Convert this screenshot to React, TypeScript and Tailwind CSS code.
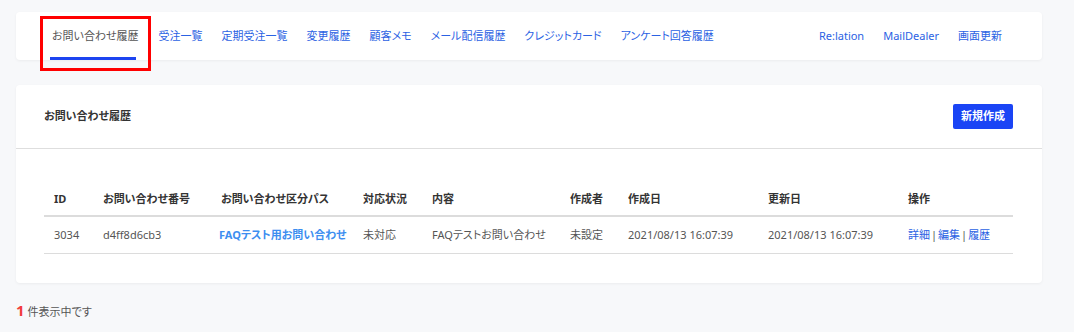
const font = { fontFamily: '"Noto Sans", "Noto Sans CJK JP", sans-serif' };

const tabs = ["受注一覧", "定期受注一覧", "変更履歴", "顧客メモ", "メール配信履歴", "クレジットカード", "アンケート回答履歴"];
const extLinks = ["Re:lation", "MailDealer", "画面更新"];

const columns = [
  { label: "ID", w: "w-[49px]" },
  { label: "お問い合わせ番号", w: "w-[118px]" },
  { label: "お問い合わせ区分パス", w: "w-[142px]" },
  { label: "対応状況", w: "w-[69px]" },
  { label: "内容", w: "w-[138px]" },
  { label: "作成者", w: "w-[58px]" },
  { label: "作成日", w: "w-[140px]" },
  { label: "更新日", w: "w-[140px]" },
  { label: "操作", w: "w-[115px]" },
];

export default function App() {
  return (
    <div className="w-[1074px] h-[332px] bg-[#f7f8fa] pt-3 overflow-hidden [font-feature-settings:'palt']" style={font}>
      {/* tab nav */}
      <div className="mx-4 w-[1026px] h-[48px] bg-white rounded shadow-[0_1px_3px_rgba(0,0,0,0.05)] flex items-center pl-6 pr-10 text-[11px]">
        <div className="relative h-full flex items-center pl-[12px] pr-[20px] text-[#555]">
          <div className="absolute left-0 top-[4px] w-[111px] h-[55px] border-[3px] border-[#ff0000]" />
          <span>お問い合わせ履歴</span>
          <div className="absolute left-[10px] w-[86px] bottom-0 h-[3px] bg-[#1d44f0]" />
        </div>
        <div className="flex gap-[19px] text-[#2b62e3]">
          {tabs.map((t) => (
            <span key={t}>{t}</span>
          ))}
        </div>
        <div className="ml-auto flex gap-[19px] text-[#2b62e3]">
          {extLinks.map((t) => (
            <span key={t}>{t}</span>
          ))}
        </div>
      </div>

      {/* main card */}
      <div className="mx-4 mt-[25px] w-[1026px] h-[198px] bg-white rounded shadow-[0_1px_3px_rgba(0,0,0,0.05)]">
        <div className="h-[64px] flex items-center justify-between pl-7 pr-[29px] border-b border-[#dedede]">
          <h2 className="text-[11px] font-bold text-[#333]">お問い合わせ履歴</h2>
          <button className="h-[25px] px-[8px] bg-[#1a44f5] text-white text-[11px] font-bold rounded-[2px]">新規作成</button>
        </div>
        <div className="px-7 pt-[35px]">
          <table className="table-fixed border-collapse text-[11px]">
            <thead>
              <tr className="border-b-2 border-[#dcdcdc]">
                {columns.map((c) => (
                  <th key={c.label} className={`${c.w} h-[32px] pl-[10px] text-left font-bold text-[#333] whitespace-nowrap`}>
                    {c.label}
                  </th>
                ))}
              </tr>
            </thead>
            <tbody className="text-[#555]">
              <tr className="border-b border-[#dcdcdc]">
                <td className="h-[37px] pl-[10px]">3034</td>
                <td className="pl-[10px]">d4ff8d6cb3</td>
                <td className="pl-[8px] font-bold text-[#3d8ef0] whitespace-nowrap">FAQテスト用お問い合わせ</td>
                <td className="pl-[10px]">未対応</td>
                <td className="pl-[10px] whitespace-nowrap">FAQテストお問い合わせ</td>
                <td className="pl-[10px]">未設定</td>
                <td className="pl-[10px] whitespace-nowrap">2021/08/13 16:07:39</td>
                <td className="pl-[10px] whitespace-nowrap">2021/08/13 16:07:39</td>
                <td className="pl-[10px] whitespace-nowrap">
                  <span className="text-[#2b62e3]">詳細</span>
                  <span className="mx-[1px]">|</span>
                  <span className="text-[#2b62e3]">編集</span>
                  <span className="mx-[1px]">|</span>
                  <span className="text-[#2b62e3]">履歴</span>
                </td>
              </tr>
            </tbody>
          </table>
        </div>
      </div>

      {/* count */}
      <div className="mt-[16px] pl-4 flex items-baseline text-[11px] text-[#555]">
        <span className="text-[15px] font-bold text-[#f23c3c] mr-[3px]">1</span>
        <span>件表示中です</span>
      </div>
    </div>
  );
}
